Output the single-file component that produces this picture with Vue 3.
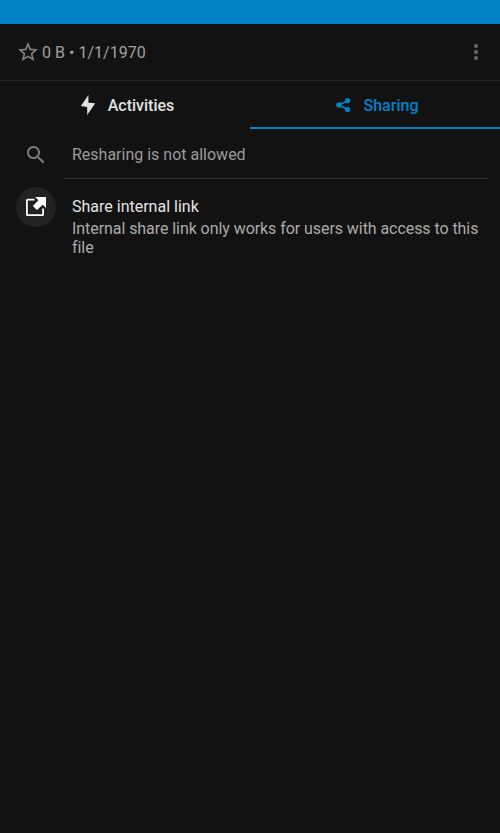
<script setup>
const tabs = [
  { id: 'activities', label: 'Activities', active: false },
  { id: 'sharing', label: 'Sharing', active: true },
]
</script>

<template>
  <main class="screen">
    <div class="status-bar"></div>
    <header class="file-header">
      <svg class="star" viewBox="0 0 24 24" width="24" height="24">
        <path d="M22 9.24l-7.19-.62L12 2 9.19 8.63 2 9.24l5.46 4.73L5.82 21 12 17.27 18.18 21l-1.63-7.03L22 9.24zM12 15.4l-3.76 2.27 1-4.28-3.32-2.88 4.38-.38L12 6.1l1.71 4.04 4.38.38-3.32 2.88 1 4.28L12 15.4z" />
      </svg>
      <span class="meta">0 B • 1/1/1970</span>
      <svg class="more" viewBox="0 0 24 24" width="24" height="24">
        <circle cx="12" cy="6" r="2.1" /><circle cx="12" cy="12" r="2.1" /><circle cx="12" cy="18" r="2.1" />
      </svg>
    </header>

    <nav class="tabs">
      <div v-for="tab in tabs" :key="tab.id" class="tab" :class="[tab.id, { active: tab.active }]">
        <svg v-if="tab.id === 'activities'" viewBox="0 0 24 24" width="24" height="24">
          <path d="M12.4 2L4.9 13 11.2 13.9V22L19.2 10.2 12.4 9.7z" />
        </svg>
        <svg v-else viewBox="0 0 24 24" width="24" height="24">
          <path class="branch" d="M16 7.5L7 12l9 4.5" />
          <circle cx="6.9" cy="12" r="2.7" /><circle cx="15.6" cy="7.5" r="2.6" /><circle cx="15.6" cy="16.5" r="2.6" />
        </svg>
        <span>{{ tab.label }}</span>
      </div>
    </nav>

    <div class="search-row">
      <svg viewBox="0 0 24 24" width="24" height="24">
        <path d="M15.5 14h-.79l-.28-.27C15.41 12.59 16 11.11 16 9.5 16 5.91 13.09 3 9.5 3S3 5.91 3 9.5 5.91 16 9.5 16c1.61 0 3.09-.59 4.23-1.57l.27.28v.79l5 4.99L20.49 19l-4.99-5zm-6 0C7.01 14 5 11.99 5 9.5S7.01 5 9.5 5 14 7.01 14 9.5 11.99 14 9.5 14z" />
      </svg>
      <div class="search-field">Resharing is not allowed</div>
    </div>

    <section class="link-row">
      <div class="avatar">
        <svg viewBox="0 0 24 24" width="24" height="24">
          <path class="frame" d="M10.5 4.7H3.6Q2.9 4.7 2.9 5.4V19.5Q2.9 20.2 3.6 20.2H18.4Q19.1 20.2 19.1 19.5V13.5" />
          <path d="M11.2 2.1H22v10.8l-3.2-3.2-5.9 5.3-4-4.1 5.5-5.6z" />
        </svg>
      </div>
      <div class="link-text">
        <div class="title">Share internal link</div>
        <div class="description">Internal share link only works for users with access to this file</div>
      </div>
    </section>
  </main>
</template>

<style>
body {
  margin: 0;
  background: #121212;
}
</style>

<style scoped>
.screen {
  min-height: 833px;
  background: #121212;
  font-family: Roboto, sans-serif;
  font-size: 16px;
  line-height: 19px;
}
svg {
  display: block;
  flex: none;
  fill: currentColor;
}
.status-bar {
  height: 24px;
  background: #0082c9;
}
.file-header {
  display: flex;
  align-items: center;
  box-sizing: border-box;
  height: 57px;
  padding: 0 12px 0 16px;
  border-bottom: 1px solid #242424;
  color: #a1a1a1;
}
.star {
  color: #858585;
}
.meta {
  flex: 1;
  margin-left: 2px;
  letter-spacing: 0.03px;
}
.more {
  color: #666;
}
.tabs {
  display: flex;
  height: 48px;
}
.tab {
  display: flex;
  flex: 1;
  align-items: center;
  justify-content: center;
  gap: 8px;
  box-sizing: border-box;
  padding-top: 2px;
  border-bottom: 2px solid transparent;
  color: #e3e3e3;
  font-weight: 500;
}
.tab.active {
  border-color: #0082c9;
  color: #0082c9;
}
.branch {
  fill: none;
  stroke: currentColor;
  stroke-width: 1.8;
}
.search-row {
  display: flex;
  height: 50px;
  padding: 0 12px 0 24px;
  color: #9b9b9b;
}
.search-row svg {
  margin-top: 14px;
  color: #7c7c7c;
}
.search-field {
  flex: 1;
  box-sizing: border-box;
  margin-left: 16px;
  padding: 16px 8px 0;
  border-bottom: 1px solid #303030;
}
.link-row {
  display: flex;
  gap: 16px;
  padding: 8px 16px 0;
}
.avatar {
  display: flex;
  flex: none;
  align-items: center;
  justify-content: center;
  width: 40px;
  height: 40px;
  border-radius: 50%;
  background: #222;
  color: #fff;
}
.frame {
  fill: none;
  stroke: currentColor;
  stroke-width: 1.8;
}
.link-text {
  padding-top: 10px;
}
.title {
  color: #e3e3e3;
}
.description {
  margin-top: 3px;
  color: #ababab;
  letter-spacing: -0.065px;
}
</style>
